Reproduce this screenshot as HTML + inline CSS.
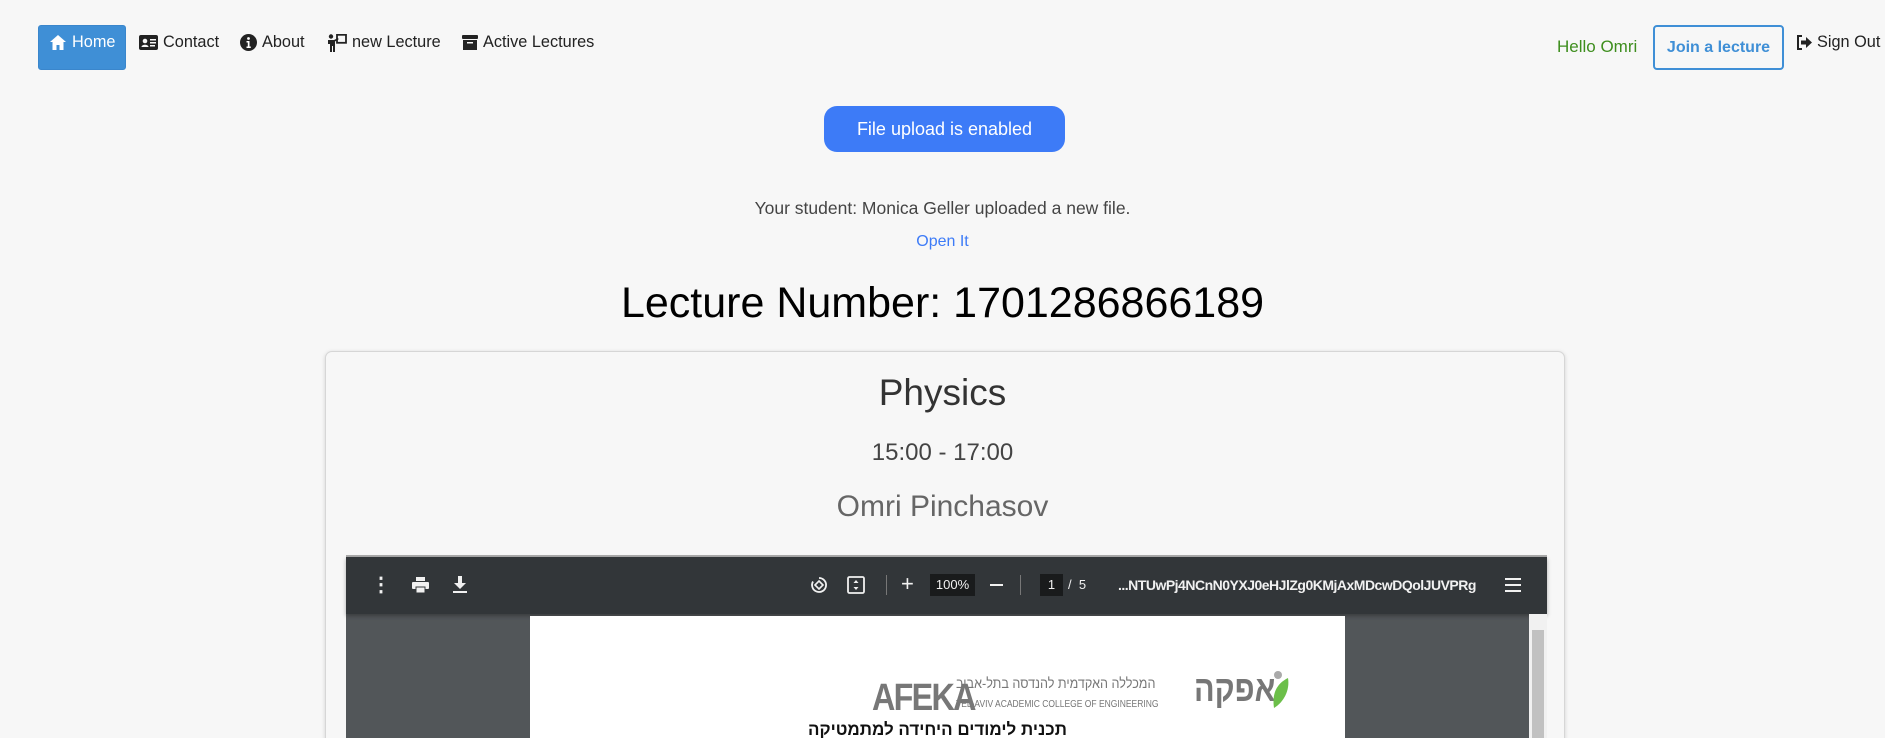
<!DOCTYPE html>
<html><head><meta charset="utf-8"><style>
*{box-sizing:border-box;margin:0;padding:0}
html{width:1885px;height:738px;overflow:hidden}
body{width:1885px;height:738px;overflow:hidden;background:#f7f7f7;font-family:"Liberation Sans",Arial,sans-serif;position:relative;color:#222}
.a{position:absolute;white-space:nowrap}
.nav{font-size:16.3px;color:#222;top:33px;display:flex;align-items:center;gap:5px}
.c{text-align:center;left:0;width:1885px}
.tb{color:#f1f1f1}
</style></head><body>
<div class="a" style="left:38px;top:25px;width:88px;height:45px;background:#3f8fd6;border-radius:3px;border:1px solid #3a86cc"></div>
<div class="a nav" style="left:49px;color:#fff"><svg width="18" height="17" viewBox="0 0 18 17"><path d="M9 1L1 8h2.5v8h4v-5h3v5h4V8H17z" fill="#fff"/></svg>Home</div>
<div class="a nav" style="left:139px"><svg width="19" height="15" viewBox="0 0 19 15"><rect x="0" y="0" width="19" height="15" rx="2" fill="#222"/><circle cx="6" cy="6" r="2.3" fill="#f7f7f7"/><path d="M2.5 12c0-3 7-3 7 0z" fill="#f7f7f7"/><rect x="11" y="4" width="6" height="1.5" fill="#f7f7f7"/><rect x="11" y="7" width="6" height="1.5" fill="#f7f7f7"/><rect x="11" y="10" width="5" height="1.5" fill="#f7f7f7"/></svg>Contact</div>
<div class="a nav" style="left:240px"><svg width="17" height="17" viewBox="0 0 17 17"><circle cx="8.5" cy="8.5" r="8.5" fill="#222"/><circle cx="8.5" cy="4.5" r="1.4" fill="#fff"/><path d="M6.5 7h3v5.5h1.3v1.5h-4.3v-1.5h1.3V8.5h-1.3z" fill="#fff"/></svg>About</div>
<div class="a nav" style="left:327px"><svg width="20" height="18" viewBox="0 0 20 18"><circle cx="4" cy="2.5" r="2.2" fill="#222"/><path d="M1 6h6l4-2 .7 1.3L8 7.5V18H6v-6H5v6H3V10H1z" fill="#222"/><rect x="10" y="0.8" width="9" height="8" fill="none" stroke="#222" stroke-width="1.8"/></svg>new Lecture</div>
<div class="a nav" style="left:462px"><svg width="16" height="16" viewBox="0 0 16 16"><rect x="0" y="0" width="16" height="4" rx="1" fill="#222"/><path d="M1 5h14v10H1z" fill="#222"/><rect x="5" y="7" width="6" height="1.5" fill="#f7f7f7"/></svg>Active Lectures</div>
<div class="a" style="left:1557px;top:37px;font-size:17px;color:#3e8e1e">Hello Omri</div>
<div class="a" style="left:1653px;top:25px;width:131px;height:45px;border:2px solid #3f8fd6;border-radius:4px;color:#3f8fd6;font-weight:bold;font-size:16px;text-align:center;line-height:41px">Join a lecture</div>
<div class="a nav" style="left:1796px"><svg width="16" height="15" viewBox="0 0 16 15"><path d="M6 1H2v13h4" fill="none" stroke="#222" stroke-width="2"/><path d="M5 5.5h5V2l6 5.5L10 13V9.5H5z" fill="#222"/></svg>Sign Out</div>
<div class="a" style="left:824px;top:106px;width:241px;height:46px;background:#3d7bf7;border-radius:13px;color:#fff;font-size:18px;text-align:center;line-height:46px">File upload is enabled</div>
<div class="a c" style="top:198px;font-size:17.5px;color:#444">Your student: Monica Geller uploaded a new file.</div>
<div class="a c" style="top:233px;font-size:16px;color:#3d7bf7">Open It</div>
<div class="a c" style="top:279px;font-size:43px;color:#000">Lecture Number: 1701286866189</div>
<div class="a" style="left:325px;top:351px;width:1240px;height:400px;border:1px solid #d6d6d6;border-radius:7px;box-shadow:0 1px 4px rgba(0,0,0,.15);background:#f7f7f7"></div>
<div class="a c" style="top:372px;font-size:37px;color:#333">Physics</div>
<div class="a c" style="top:439px;font-size:24px;color:#444">15:00 - 17:00</div>
<div class="a c" style="top:490px;font-size:30px;color:#666">Omri Pinchasov</div>
<div class="a" style="left:346px;top:555px;width:1201px;height:183px;background:#525659;border-top:2px solid #aaa"></div>
<div class="a" style="left:346px;top:557px;width:1201px;height:57px;background:#323639;box-shadow:0 2px 4px rgba(0,0,0,.3)"></div>
<div class="a tb" style="left:371px;top:572px;font-size:20px;font-weight:bold">⋮</div>
<svg class="a" style="left:412px;top:577px" width="17" height="16" viewBox="0 0 17 16"><rect x="4" y="0" width="9" height="4" fill="#f1f1f1"/><rect x="0" y="5" width="17" height="7" rx="1" fill="#f1f1f1"/><rect x="4" y="10" width="9" height="6" fill="#f1f1f1" stroke="#323639"/></svg>
<svg class="a" style="left:453px;top:576px" width="14" height="17" viewBox="0 0 14 17"><path d="M5 0h4v7h4L7 13 1 7h4z M0 15h14v2H0z" fill="#f1f1f1"/></svg>
<svg class="a" style="left:810px;top:576px" width="18" height="18" viewBox="0 0 18 18"><path d="M9 2a7 7 0 1 1-6 3.5" fill="none" stroke="#f1f1f1" stroke-width="1.8"/><path d="M9 5l4 4-4 4-4-4z" fill="none" stroke="#f1f1f1" stroke-width="1.6"/></svg>
<svg class="a" style="left:847px;top:576px" width="18" height="18" viewBox="0 0 18 18"><rect x="1" y="1" width="16" height="16" rx="1.5" fill="none" stroke="#f1f1f1" stroke-width="1.8"/><path d="M9 4l-2.5 3h5zM9 14l-2.5-3h5z" fill="#f1f1f1"/></svg>
<div class="a" style="left:886px;top:575px;width:1px;height:20px;background:#777"></div>
<div class="a tb" style="left:901px;top:571px;font-size:22px">+</div>
<div class="a" style="left:930px;top:574px;width:45px;height:22px;background:#191b1c;color:#f1f1f1;font-size:13px;text-align:center;line-height:22px">100%</div>
<div class="a" style="left:990px;top:584px;width:13px;height:2px;background:#f1f1f1"></div>
<div class="a" style="left:1020px;top:575px;width:1px;height:20px;background:#777"></div>
<div class="a" style="left:1040px;top:574px;width:23px;height:22px;background:#191b1c;color:#f1f1f1;font-size:13px;text-align:center;line-height:22px">1</div>
<div class="a tb" style="left:1068px;top:577px;font-size:13px">/ &nbsp;5</div>
<div class="a tb" style="left:1118px;top:577px;font-size:14px;font-weight:bold;letter-spacing:-0.5px">...NTUwPj4NCnN0YXJ0eHJlZg0KMjAxMDcwDQolJUVPRg</div>
<svg class="a" style="left:1505px;top:578px" width="16" height="14" viewBox="0 0 16 14"><path d="M0 1h16M0 7h16M0 13h16" stroke="#f1f1f1" stroke-width="2"/></svg>
<div class="a" style="left:530px;top:616px;width:815px;height:122px;background:#fff"></div>
<div class="a" style="left:1529px;top:614px;width:18px;height:124px;background:#f1f1f1"></div>
<div class="a" style="left:1532px;top:630px;width:12px;height:108px;background:#c1c1c1"></div>
<div class="a" style="left:872px;top:677px;font-size:38px;font-weight:bold;color:#777;letter-spacing:-2px;transform:scaleX(.85);transform-origin:left">AFEKA</div>
<div class="a" style="left:956px;top:675px;font-size:14px;color:#777;direction:rtl;font-family:'Liberation Sans','Noto Sans CJK SC',sans-serif;transform:scaleX(.9);transform-origin:left">המכללה האקדמית להנדסה בתל-אביב</div>
<div class="a" style="left:956px;top:699px;font-size:10px;color:#777;transform:scaleX(.85);transform-origin:left">TEL-AVIV ACADEMIC COLLEGE OF ENGINEERING</div>
<div class="a" style="left:1194px;top:668px;font-size:36px;color:#777;font-weight:bold;transform:scaleX(.85);transform-origin:left">אפקה</div>
<svg class="a" style="left:1266px;top:670px" width="26" height="40" viewBox="0 0 26 40"><circle cx="12" cy="5" r="4" fill="#aaa"/><path d="M22 8C10 14 6 24 8 38c10-6 16-18 14-30z" fill="#6cbf4a"/></svg>
<div class="a" style="left:808px;top:720px;font-size:17px;font-weight:bold;color:#111;font-family:'Liberation Sans','Noto Sans CJK SC',sans-serif">תכנית לימודים היחידה למתמטיקה</div>
</body></html>
